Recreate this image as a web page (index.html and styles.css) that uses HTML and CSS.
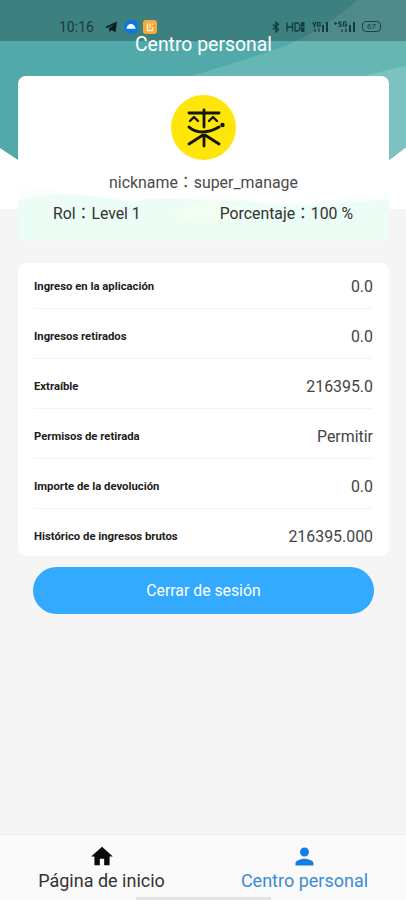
FILE: index.html
```html
<!DOCTYPE html>
<html lang="es">
<head>
    <meta charset="UTF-8">
    <meta name="viewport" content="width=device-width, initial-scale=1.0">
    <title>Centro personal</title>
    <link rel="stylesheet" href="styles.css">
</head>
<body>
    <div class="app">
        <header class="hero">
            <svg class="hero-bg" viewBox="0 0 406 209" preserveAspectRatio="none">
                <path d="M0 0H406V147L389 160L300 209H95L18 160L0 148Z" fill="#51a9a9"/>
                <path d="M357 0C330 24 300 43 262 54C240 61 215 69 190 76V200H310L389 160L406 147V0Z" fill="#66b6b4"/>
                <path d="M406 66C390 69 375 73 355 79V175L389 160L406 147Z" fill="#7bc2c0"/>
            </svg>

            <div class="status-bar">
                <div class="status-left">
                    <span class="clock">10:16</span>
                    <svg class="telegram" width="13" height="12" viewBox="0 0 13 12">
                        <path d="M0 6L12 0.5L10.5 11.5L6.5 9L4.5 11L4 7.5L9.5 3L2.8 7Z" fill="#101b1b"/>
                    </svg>
                    <svg width="14" height="14" viewBox="0 0 14 14">
                        <circle cx="7" cy="7" r="7" fill="#0876e8"/>
                        <path d="M2.5 8.8A4.5 4.7 0 0 1 11.5 8.8Z" fill="#fff"/>
                    </svg>
                    <svg width="14" height="14" viewBox="0 0 14 14">
                        <rect width="14" height="14" rx="3" fill="#f2ab3d"/>
                        <path d="M4.5 3.5V10.5H9.5V7M7 3.5V7.5M9.5 3.5V5" fill="none" stroke="#fff0cf" stroke-width="1.3"/>
                    </svg>
                </div>
                <div class="status-right">
                    <svg width="8" height="12" viewBox="0 0 8 12">
                        <path d="M1 3.5L6.5 8.5L4 11V1L6.5 3.5L1 8.5" fill="none" stroke="#173a3a" stroke-width="1.3"/>
                    </svg>
                    <svg class="hd" width="20" height="12" viewBox="0 0 20 12">
                        <path d="M1 1.5V10.5M6.5 1.5V10.5M1 6H6.5M9 2V10H11C15 10 15 2 11 2Z" fill="none" stroke="#173a3a" stroke-width="1.3"/>
                        <path d="M15 1H18.5V5.5H15ZM15 6.5H18.5V11H15Z" fill="#173a3a"/>
                    </svg>
                    <svg class="signal" width="17" height="12" viewBox="0 0 17 12">
                        <path d="M1 1L2.5 5L4 1M5.5 1.5H8V5H5.5ZM3 8V11M7 7.5V11" fill="none" stroke="#173a3a" stroke-width="1.2"/>
                        <path d="M10 4H12V11H10ZM14 1H16V11H14Z" fill="#173a3a"/>
                    </svg>
                    <svg class="signal-5g" width="22" height="12" viewBox="0 0 22 12">
                        <path d="M0 2.5H3M1.5 1V4M7.5 1H5V3H7V5.5H4.5M12.5 1H9.5V5H12.5V3H11M8 8.5V11M12 7.5V11" fill="none" stroke="#173a3a" stroke-width="1.2"/>
                        <path d="M15 4H17V11H15ZM19 1H21V11H19Z" fill="#173a3a"/>
                    </svg>
                    <span class="battery">67</span>
                </div>
            </div>

            <h1 class="page-title">Centro personal</h1>

            <section class="profile-card">
                <svg class="avatar" width="65" height="65" viewBox="0 0 65 65">
                    <circle cx="32.5" cy="32.5" r="32.5" fill="#ffe60a"/>
                    <g fill="none" stroke="#17160a" stroke-width="2.8" stroke-linecap="round" stroke-linejoin="round">
                        <path d="M18 18H48M33 15V32M33 41V51"/>
                        <path d="M19 26L23 22L27 26M38 26L42 22L46 26" stroke-width="2.4"/>
                        <path d="M18 32C25 39 38 38 48 32" stroke-width="3"/>
                        <path d="M32 40L18 49M34 40L48 49"/>
                    </g>
                    <circle cx="51.5" cy="30" r="2.2" fill="#17160a"/>
                </svg>
                <p class="nickname">nickname：super_manage</p>
                <div class="profile-info">
                    <svg class="wave" viewBox="0 0 371 56" preserveAspectRatio="none">
                        <path d="M0 0C40 2 65 16 110 15C155 14 180 11 215 13C265 19 310 18 371 6V56H0Z" fill="#fafffb"/>
                        <path d="M0 16C35 5 70 10 115 17C155 8 180 19 225 15C275 26 325 17 371 14V56H0Z" fill="#ebfdf4"/>
                        <path d="M155 30C175 12 210 12 233 28C210 37 175 43 155 30Z" fill="#f1fef1"/>
                    </svg>
                    <span class="role">Rol：Level 1</span>
                    <span class="percent">Porcentaje：100 %</span>
                </div>
            </section>
        </header>

        <main class="content">
            <ul class="stats">
                <li><span class="label">Ingreso en la aplicación</span><span class="value">0.0</span></li>
                <li><span class="label">Ingresos retirados</span><span class="value">0.0</span></li>
                <li><span class="label">Extraíble</span><span class="value">216395.0</span></li>
                <li><span class="label">Permisos de retirada</span><span class="value">Permitir</span></li>
                <li><span class="label">Importe de la devolución</span><span class="value">0.0</span></li>
                <li><span class="label">Histórico de ingresos brutos</span><span class="value">216395.000</span></li>
            </ul>
            <button class="logout" type="button">Cerrar de sesión</button>
        </main>

        <nav class="tab-bar">
            <a class="tab" href="#">
                <svg width="26" height="26" viewBox="0 0 24 24"><path d="M10 20v-6h4v6h5v-8h3L12 3 2 12h3v8z" fill="#0b0b0b"/></svg>
                <span>Página de inicio</span>
            </a>
            <a class="tab active" href="#">
                <svg width="27" height="27" viewBox="0 0 24 24"><path d="M12 12c2.21 0 4-1.79 4-4s-1.79-4-4-4-4 1.79-4 4 1.79 4 4 4zm0 2c-2.67 0-8 1.34-8 4v2h16v-2c0-2.66-5.33-4-8-4z" fill="#127de6"/></svg>
                <span>Centro personal</span>
            </a>
            <div class="home-indicator"></div>
        </nav>
    </div>
</body>
</html>
```
FILE: styles.css
```css
* {
    margin: 0;
    padding: 0;
    box-sizing: border-box;
}

body {
    font-family: Roboto, 'Noto Sans CJK TC', sans-serif;
    background: #f5f5f5;
    color: #333;
}

.app {
    height: 900px;
    display: flex;
    flex-direction: column;
    overflow: hidden;
}

.hero {
    position: relative;
    height: 241px;
    padding: 0 17px 0 18px;
}

.hero-bg {
    position: absolute;
    top: 0;
    left: 0;
    width: 100%;
    height: 209px;
    background: #fff;
}

/* barra de estado */
.status-bar {
    position: absolute;
    top: 0;
    left: 0;
    width: 100%;
    height: 41px;
    padding: 12px 25px 0 59px;
    display: flex;
    justify-content: space-between;
    background: rgba(0, 0, 0, 0.24);
}

.status-left,
.status-right {
    display: flex;
    align-items: center;
    height: 29px;
}

.clock {
    width: 36px;
    margin-right: 10px;
    font-size: 14px;
    color: #193b3b;
}

.telegram {
    margin-right: 6px;
}

.status-left svg + svg + svg {
    margin-left: 5px;
}

.hd {
    margin-left: 6px;
}

.signal {
    margin-left: 6px;
}

.signal-5g {
    margin-left: 5px;
}

.battery {
    width: 19px;
    height: 11px;
    margin-left: 6px;
    border: 1.5px solid #1d4545;
    border-radius: 4px;
    font-size: 8px;
    line-height: 9px;
    text-align: center;
    color: #173a3a;
}

.page-title {
    position: relative;
    height: 76px;
    padding-top: 33px;
    font-size: 19.4px;
    font-weight: 400;
    line-height: 24px;
    text-align: center;
    color: #fff;
}

.profile-card {
    position: relative;
    height: 165px;
    padding-top: 19px;
    display: flex;
    flex-direction: column;
    align-items: center;
    background: #fff;
    border-radius: 8px 8px 0 0;
}

.nickname {
    margin-top: 13px;
    font-size: 15.9px;
    line-height: 20px;
    color: #4b4b4b;
}

.profile-info {
    position: relative;
    width: 100%;
    flex: 1;
    margin-top: -1px;
    display: flex;
    justify-content: space-between;
    padding: 12px 36px 0 35px;
    font-size: 15.8px;
    line-height: 20px;
}

.wave {
    position: absolute;
    left: 0;
    bottom: 0;
    width: 100%;
    height: 56px;
}

.profile-info span {
    position: relative;
}

.nickname {
    position: relative;
    z-index: 1;
}

.content {
    flex: 1;
    padding: 22px 17px 0 18px;
}

.stats {
    height: 293px;
    padding: 0 16px;
    overflow: hidden;
    list-style: none;
    background: #fff;
    border-radius: 8px;
}

.stats li {
    height: 50px;
    padding-top: 5px;
    display: flex;
    justify-content: space-between;
    align-items: center;
    border-bottom: 1px solid #f3f3f3;
}

.stats li:first-child {
    height: 46px;
    padding-top: 1px;
}

.stats li:last-child {
    border-bottom: 0;
}

.label {
    font-size: 11.3px;
    font-weight: 700;
    color: #1c1c1c;
}

.value {
    font-size: 15.9px;
    color: #444;
}

.logout {
    display: block;
    width: 341px;
    height: 47px;
    margin: 11px auto 0;
    border: 0;
    border-radius: 24px;
    background: #34aaff;
    font-family: inherit;
    font-size: 15.8px;
    color: #fff;
}

.tab-bar {
    position: relative;
    height: 66px;
    display: flex;
    background: #fafafa;
    border-top: 1px solid #eee;
}

.tab {
    flex: 1;
    padding-top: 8px;
    display: flex;
    flex-direction: column;
    align-items: center;
    font-size: 18px;
    line-height: 22px;
    text-decoration: none;
    color: #333;
}

.tab svg {
    height: 27px;
}

.tab.active {
    color: #3b8bd5;
}

.home-indicator {
    position: absolute;
    left: 136px;
    bottom: 0;
    width: 135px;
    height: 3px;
    background: #e2e2e2;
}
```
